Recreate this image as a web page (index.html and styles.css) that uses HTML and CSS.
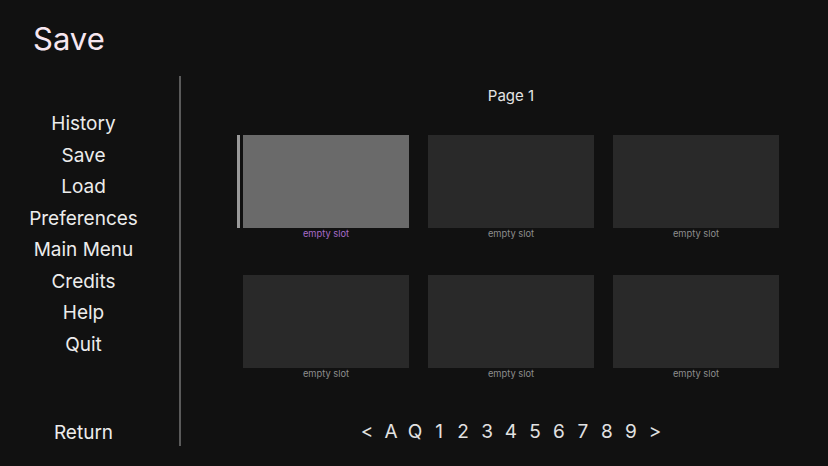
FILE: index.html
```html
<!DOCTYPE html>
<html>
<head>
<meta charset="utf-8">
<link rel="stylesheet" href="styles.css">
</head>
<body>
<div class="screen">
  <header class="header"><h1 class="title">Save</h1></header>
  <div class="main">
    <nav class="nav">
      <ul class="menu">
        <li>History</li>
        <li>Save</li>
        <li>Load</li>
        <li>Preferences</li>
        <li>Main Menu</li>
        <li>Credits</li>
        <li>Help</li>
        <li>Quit</li>
      </ul>
      <div class="return">Return</div>
    </nav>
    <div class="divider"></div>
    <section class="content">
      <div class="page-name">Page 1</div>
      <div class="slots">
        <div class="slot hover"><div class="thumb"></div><div class="label">empty slot</div></div>
        <div class="slot"><div class="thumb"></div><div class="label">empty slot</div></div>
        <div class="slot"><div class="thumb"></div><div class="label">empty slot</div></div>
        <div class="slot"><div class="thumb"></div><div class="label">empty slot</div></div>
        <div class="slot"><div class="thumb"></div><div class="label">empty slot</div></div>
        <div class="slot"><div class="thumb"></div><div class="label">empty slot</div></div>
      </div>
      <div class="pager">
        <span>&lt;</span><span>A</span><span>Q</span><span>1</span><span>2</span><span>3</span><span>4</span><span>5</span><span>6</span><span>7</span><span>8</span><span>9</span><span>&gt;</span>
      </div>
    </section>
  </div>
</div>
</body>
</html>
```
FILE: styles.css
```css
html, body {
  margin: 0;
  padding: 0;
  background: #111111;
}
body {
  font-family: "Inter", "Noto Sans", sans-serif;
  color: #e6e6e6;
}
.screen {
  width: 828px;
  height: 466px;
  overflow: hidden;
}
.header {
  height: 76px;
}
.title {
  margin: 0;
  padding: 21px 0 0 33px;
  font-size: 31px;
  font-weight: 400;
  line-height: 36px;
  color: #f7e6f0;
}
.main {
  display: flex;
  height: 370px;
}
.nav {
  width: 167px;
  display: flex;
  flex-direction: column;
  align-items: center;
  padding-top: 32px;
  box-sizing: border-box;
}
.menu {
  list-style: none;
  margin: 0;
  padding: 0;
  text-align: center;
}
.menu li, .return {
  font-size: 19px;
  line-height: 31.5px;
  color: #ececec;
  white-space: nowrap;
}
.return {
  margin-top: auto;
  margin-bottom: -2px;
}
.divider {
  width: 2px;
  margin-left: 12px;
  background: #5a5a5a;
  height: 370px;
}
.content {
  padding-left: 62px;
  width: 536px;
  display: flex;
  flex-direction: column;
  align-items: center;
}
.page-name {
  margin-top: 10px;
  font-size: 15px;
  line-height: 20px;
  color: #e4e4e4;
}
.slots {
  margin-top: 29px;
  display: grid;
  grid-template-columns: repeat(3, 166px);
  column-gap: 19px;
  row-gap: 35px;
}
.slot {
  position: relative;
  display: flex;
  flex-direction: column;
  align-items: center;
}
.thumb {
  width: 166px;
  height: 93px;
  background: #292929;
}
.label {
  font-size: 9.3px;
  line-height: 12px;
  color: #8e8e8e;
}
.slot.hover .thumb {
  background: #6a6a6a;
}
.slot.hover .label {
  color: #a86cc8;
}
.slot.hover::before {
  content: "";
  position: absolute;
  left: -6px;
  top: 0;
  width: 3px;
  height: 93px;
  background: #9a9a9a;
}
.pager {
  margin-top: 40px;
  display: flex;
  font-size: 19px;
  line-height: 24px;
  color: #e2e2e2;
}
.pager span {
  width: 24px;
  text-align: center;
}
```
